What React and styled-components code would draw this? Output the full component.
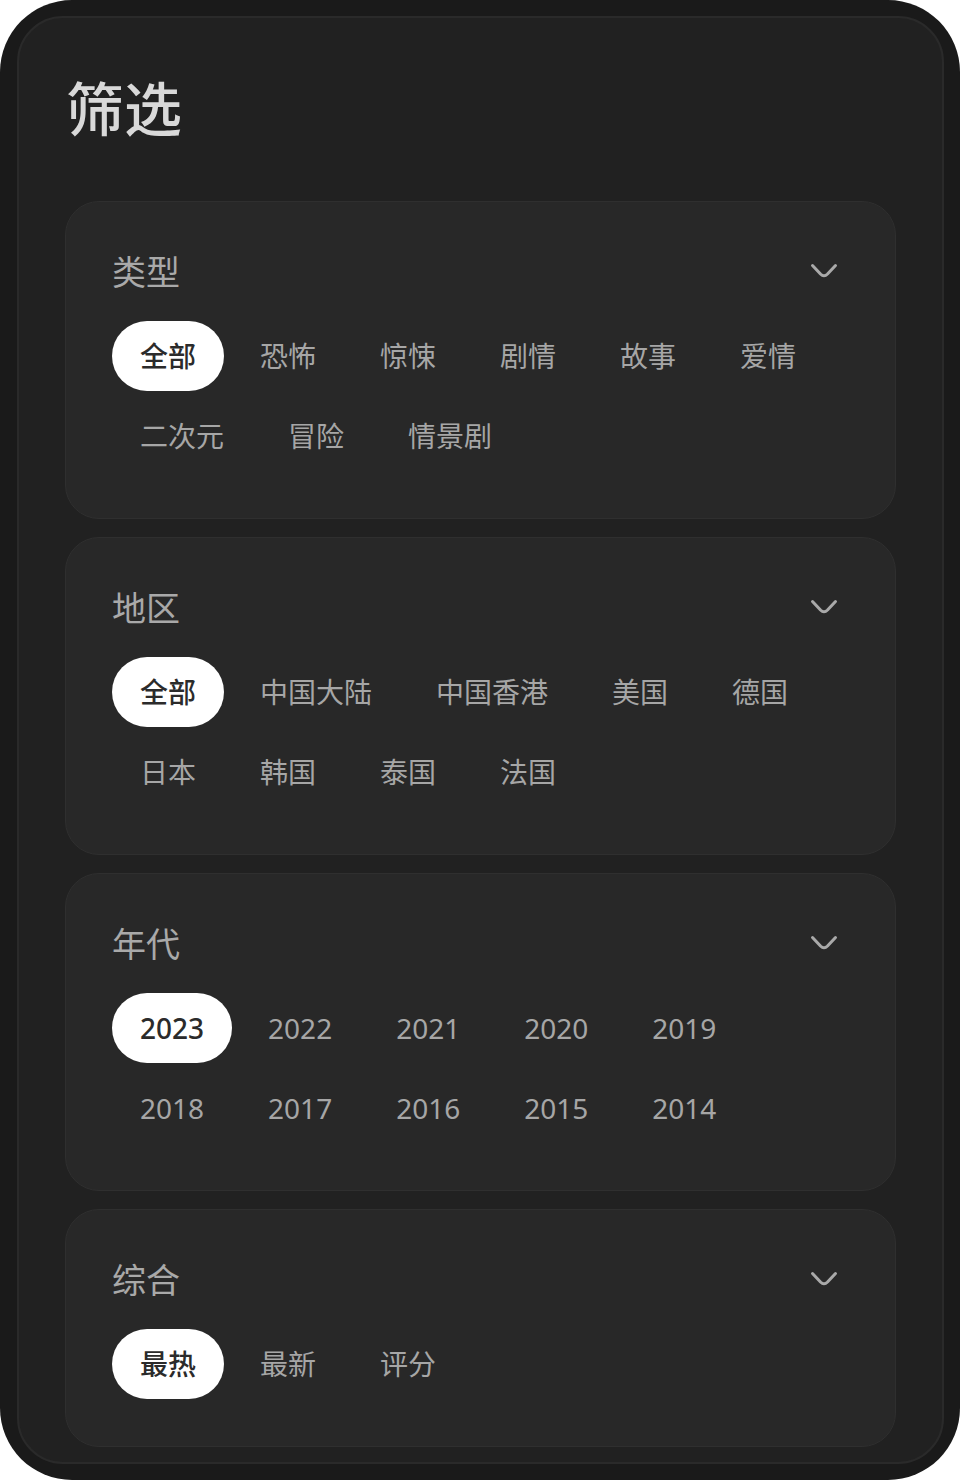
import React, { useState } from "react";
import styled, { createGlobalStyle } from "styled-components";

const GlobalStyle = createGlobalStyle`
  html, body {
    margin: 0;
    padding: 0;
    background: #ffffff;
  }
  body {
    font-family: "Noto Sans", "Noto Sans CJK SC", sans-serif;
  }
`;

const Frame = styled.div`
  width: 960px;
  height: 1480px;
  box-sizing: border-box;
  padding: 16px 16px 16px 17px;
  background: #1a1a1a;
  border-radius: 72px;
  display: flex;
`;

const Panel = styled.div`
  flex: 1;
  box-sizing: border-box;
  background: #212121;
  border: 2px solid #2a2a2a;
  border-radius: 46px;
  padding: 53px 46px 0 46px;
  display: flex;
  flex-direction: column;
  overflow: hidden;
`;

const Title = styled.h1`
  margin: 0 0 60px 1px;
  font-family: "Noto Sans CJK SC", sans-serif;
  font-size: 58px;
  line-height: 70px;
  font-weight: 500;
  color: #d9d9d9;
`;

const Sections = styled.div`
  display: flex;
  flex-direction: column;
  gap: 18px;
`;

const Card = styled.section`
  background: #282828;
  border: 1px solid #2f2f2f;
  border-radius: 34px;
  padding: 49px 47px 47px 46px;
`;

const Header = styled.div`
  display: flex;
  align-items: center;
  justify-content: space-between;
  height: 40px;
  margin-bottom: 30px;
  padding-right: 10px;
`;

const CardTitle = styled.h2`
  margin: 0;
  font-family: "Noto Sans CJK SC", sans-serif;
  font-size: 34px;
  line-height: 40px;
  font-weight: 400;
  color: #a9a9a9;
`;

const Chevron = styled.svg`
  width: 28px;
  height: 16px;
  display: block;
  color: #a9a9a9;
`;

const ChipRow = styled.div`
  display: flex;
  flex-wrap: wrap;
  gap: 10px 8px;
`;

const Chip = styled.button`
  height: 70px;
  min-width: 111px;
  padding: 0 28px;
  box-sizing: border-box;
  border: none;
  border-radius: 35px;
  background: ${(p) => (p.$active ? "#ffffff" : "transparent")};
  color: ${(p) => (p.$active ? "#2b2b2b" : "#a6a6a6")};
  font-family: "Noto Sans", "Noto Sans CJK SC", sans-serif;
  font-size: 28px;
  font-weight: ${(p) => (p.$active ? 500 : 400)};
  line-height: 70px;
  white-space: nowrap;
  cursor: pointer;
`;

const groups = [
  {
    title: "类型",
    items: ["全部", "恐怖", "惊悚", "剧情", "故事", "爱情", "二次元", "冒险", "情景剧"],
  },
  {
    title: "地区",
    items: ["全部", "中国大陆", "中国香港", "美国", "德国", "日本", "韩国", "泰国", "法国"],
  },
  {
    title: "年代",
    items: ["2023", "2022", "2021", "2020", "2019", "2018", "2017", "2016", "2015", "2014"],
  },
  {
    title: "综合",
    items: ["最热", "最新", "评分"],
  },
];

const FilterGroup = ({ title, items }) => {
  const [selected, setSelected] = useState(0);
  return (
    <Card>
      <Header>
        <CardTitle>{title}</CardTitle>
        <Chevron viewBox="0 0 28 16" fill="none">
          <path
            d="M2.5 2.5 L10.5 11 Q14 14.5 17.5 11 L25.5 2.5"
            stroke="currentColor"
            strokeWidth="3"
            strokeLinecap="round"
            strokeLinejoin="round"
          />
        </Chevron>
      </Header>
      <ChipRow>
        {items.map((item, i) => (
          <Chip key={item} $active={i === selected} onClick={() => setSelected(i)}>
            {item}
          </Chip>
        ))}
      </ChipRow>
    </Card>
  );
};

const App = () => (
  <>
    <GlobalStyle />
    <Frame>
      <Panel>
        <Title>筛选</Title>
        <Sections>
          {groups.map((g) => (
            <FilterGroup key={g.title} title={g.title} items={g.items} />
          ))}
        </Sections>
      </Panel>
    </Frame>
  </>
);

export default App;
